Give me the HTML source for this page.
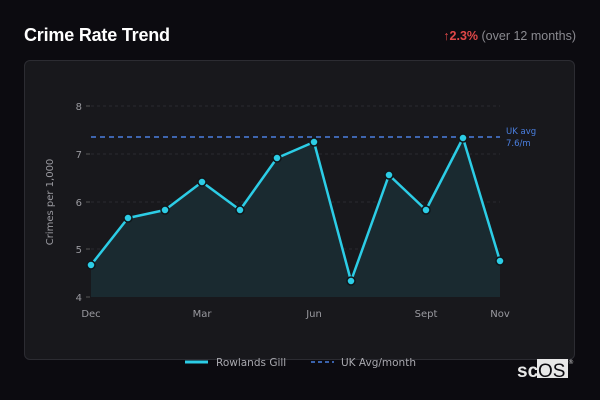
<!DOCTYPE html>
<html><head><style>
body{margin:0;width:600px;height:400px;background:#0c0b10;font-family:"Liberation Sans",sans-serif;overflow:hidden;position:relative}
.t{position:absolute;left:24px;top:25px;color:#fff;font-weight:bold;font-size:18px;letter-spacing:-0.2px}
.r{position:absolute;right:24px;top:29px;font-size:12.5px;color:#8a8a90}
.r b{color:#e04848}
.card{position:absolute;left:24px;top:60px;width:551px;height:300px;background:#18181c;border:1px solid #2c2c32;border-radius:6px;box-sizing:border-box}
</style></head><body>
<div class="t">Crime Rate Trend</div>
<div class="r"><span style="color:#e04848">↑</span><b>2.3%</b> (over 12 months)</div>
<div class="card"></div>
<svg style="position:absolute;left:0;top:0" width="600" height="400" font-family="DejaVu Sans,Liberation Sans,sans-serif">
<g stroke="#2a2a30" stroke-dasharray="3,3" stroke-width="1">
<line x1="91" y1="106" x2="500" y2="106"/><line x1="91" y1="154" x2="500" y2="154"/><line x1="91" y1="202" x2="500" y2="202"/><line x1="91" y1="249" x2="500" y2="249"/>
</g>
<g stroke="#555" stroke-width="1"><line x1="86" y1="106" x2="90" y2="106"/><line x1="86" y1="154" x2="90" y2="154"/><line x1="86" y1="202" x2="90" y2="202"/><line x1="86" y1="249" x2="90" y2="249"/><line x1="86" y1="297" x2="90" y2="297"/></g>
<g fill="#9a9aa0" font-size="10" text-anchor="end"><text x="82" y="110">8</text><text x="82" y="158">7</text><text x="82" y="206">6</text><text x="82" y="253">5</text><text x="82" y="301">4</text></g>
<text transform="translate(53,202) rotate(-90)" fill="#9a9aa0" font-size="10" text-anchor="middle">Crimes per 1,000</text>
<g fill="#9a9aa0" font-size="10" text-anchor="middle"><text x="91" y="317">Dec</text><text x="202" y="317">Mar</text><text x="314" y="317">Jun</text><text x="426" y="317">Sept</text><text x="500" y="317">Nov</text></g>
<polygon fill="#1a2a30" points="91,297 91,265 128,218 165,210 202,182 240,210 277,158 314,142 351,281 389,175 426,210 463,138 500,261 500,297"/>
<line x1="91" y1="137" x2="500" y2="137" stroke="#4a7fe0" stroke-width="1.5" stroke-dasharray="5,4"/>
<text x="506" y="134" fill="#4a7fe0" font-size="8.5">UK avg</text><text x="506" y="146" fill="#4a7fe0" font-size="8.5">7.6/m</text>
<polyline fill="none" stroke="#2ccde6" stroke-width="2.5" stroke-linejoin="round" points="91,265 128,218 165,210 202,182 240,210 277,158 314,142 351,281 389,175 426,210 463,138 500,261"/>
<g fill="#2ccde6" stroke="#10161a" stroke-width="1.5">
<circle cx="91" cy="265" r="4"/><circle cx="128" cy="218" r="4"/><circle cx="165" cy="210" r="4"/><circle cx="202" cy="182" r="4"/><circle cx="240" cy="210" r="4"/><circle cx="277" cy="158" r="4"/><circle cx="314" cy="142" r="4"/><circle cx="351" cy="281" r="4"/><circle cx="389" cy="175" r="4"/><circle cx="426" cy="210" r="4"/><circle cx="463" cy="138" r="4"/><circle cx="500" cy="261" r="4"/>
</g>
<line x1="185" y1="362" x2="208" y2="362" stroke="#2ccde6" stroke-width="3"/>
<text x="216" y="366" fill="#a8a8ae" font-size="10.5">Rowlands Gill</text>
<line x1="311" y1="362" x2="334" y2="362" stroke="#4a7fe0" stroke-width="1.5" stroke-dasharray="4,3"/>
<text x="341" y="366" fill="#a8a8ae" font-size="10.5">UK Avg/month</text>
<rect x="537" y="359" width="31" height="19" fill="#e8e8e8"/>
<text x="517" y="377" fill="#e8e8e8" font-size="19" font-family="Liberation Sans,sans-serif" font-weight="bold">sc</text>
<text x="538" y="377" fill="#0c0b10" font-size="19" font-family="Liberation Sans,sans-serif">OS</text>
<text x="568" y="364" fill="#ccc" font-size="6">®</text>
</svg>
</body></html>
